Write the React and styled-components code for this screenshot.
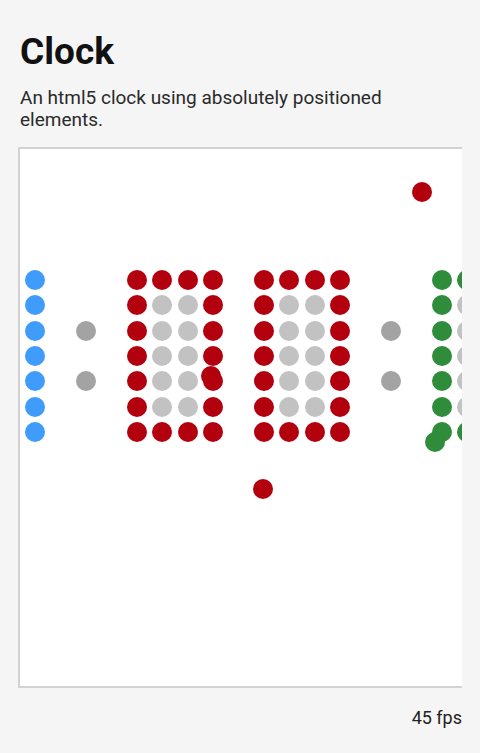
import React from 'react';
import styled, { createGlobalStyle } from 'styled-components';

const GlobalStyle = createGlobalStyle`
  html, body {
    margin: 0;
    padding: 0;
    background: #f5f5f5;
  }
  body {
    font-family: Roboto, "Noto Sans", "Liberation Sans", sans-serif;
    color: #222;
  }
`;

const Page = styled.div`
  width: 480px;
  height: 753px;
  display: flex;
  flex-direction: column;
  overflow: hidden;
`;

const Title = styled.h1`
  margin: 30px 0 0 20px;
  font-size: 37px;
  line-height: 44px;
  font-weight: 700;
  color: #111;
`;

const Subtitle = styled.p`
  margin: 13px 0 0 20px;
  width: 420px;
  font-size: 19px;
  line-height: 21.6px;
  color: #2a2a2a;
`;

const Clip = styled.div`
  margin: 17px 0 0 18px;
  width: 444px;
  overflow: hidden;
`;

const Frame = styled.div`
  position: relative;
  width: 520px;
  height: 537px;
  background: #ffffff;
  border: 2px solid #d2d2d2;
`;

const Dot = styled.span`
  position: absolute;
  width: 20px;
  height: 20px;
  margin: -10px 0 0 -10px;
  border-radius: 50%;
  background: ${(p) => p.$color};
`;

const Fps = styled.div`
  margin: 19px 18px 0 0;
  text-align: right;
  font-size: 18px;
  line-height: 21.6px;
  color: #222;
`;

const PITCH = 25.44;
const X0 = 15;
const Y0 = 130.5;

const RED = '#b3000f';
const BLUE = '#409cfb';
const GREEN = '#2e8c3b';
const OFF = '#c2c2c2';
const COLON = '#a3a3a3';

const ZERO = [
  '1111',
  '1001',
  '1001',
  '1001',
  '1001',
  '1001',
  '1111',
];

const buildDots = () => {
  const dots = [];
  const cell = (c, r, color) =>
    dots.push({ x: X0 + c * PITCH, y: Y0 + r * PITCH, color });

  for (let r = 0; r < 7; r++) cell(0, r, BLUE);
  [2, 14].forEach((c) => {
    cell(c, 2, COLON);
    cell(c, 4, COLON);
  });
  [4, 9].forEach((start) => {
    ZERO.forEach((row, r) => {
      row.split('').forEach((on, i) => cell(start + i, r, on === '1' ? RED : OFF));
    });
  });
  ZERO.forEach((row, r) => {
    row.split('').forEach((on, i) => cell(16 + i, r, on === '1' ? GREEN : OFF));
  });

  // falling dots
  dots.push({ x: 191, y: 227, color: RED });
  dots.push({ x: 402, y: 42.5, color: RED });
  dots.push({ x: 243, y: 339.5, color: RED });
  dots.push({ x: 415, y: 292.5, color: GREEN });
  return dots;
};

const dots = buildDots();

const App = () => (
  <Page>
    <GlobalStyle />
    <Title>Clock</Title>
    <Subtitle>An html5 clock using absolutely positioned elements.</Subtitle>
    <Clip>
      <Frame>
        {dots.map((d, i) => (
          <Dot key={i} $color={d.color} style={{ left: d.x, top: d.y }} />
        ))}
      </Frame>
    </Clip>
    <Fps>45 fps</Fps>
  </Page>
);

export default App;
